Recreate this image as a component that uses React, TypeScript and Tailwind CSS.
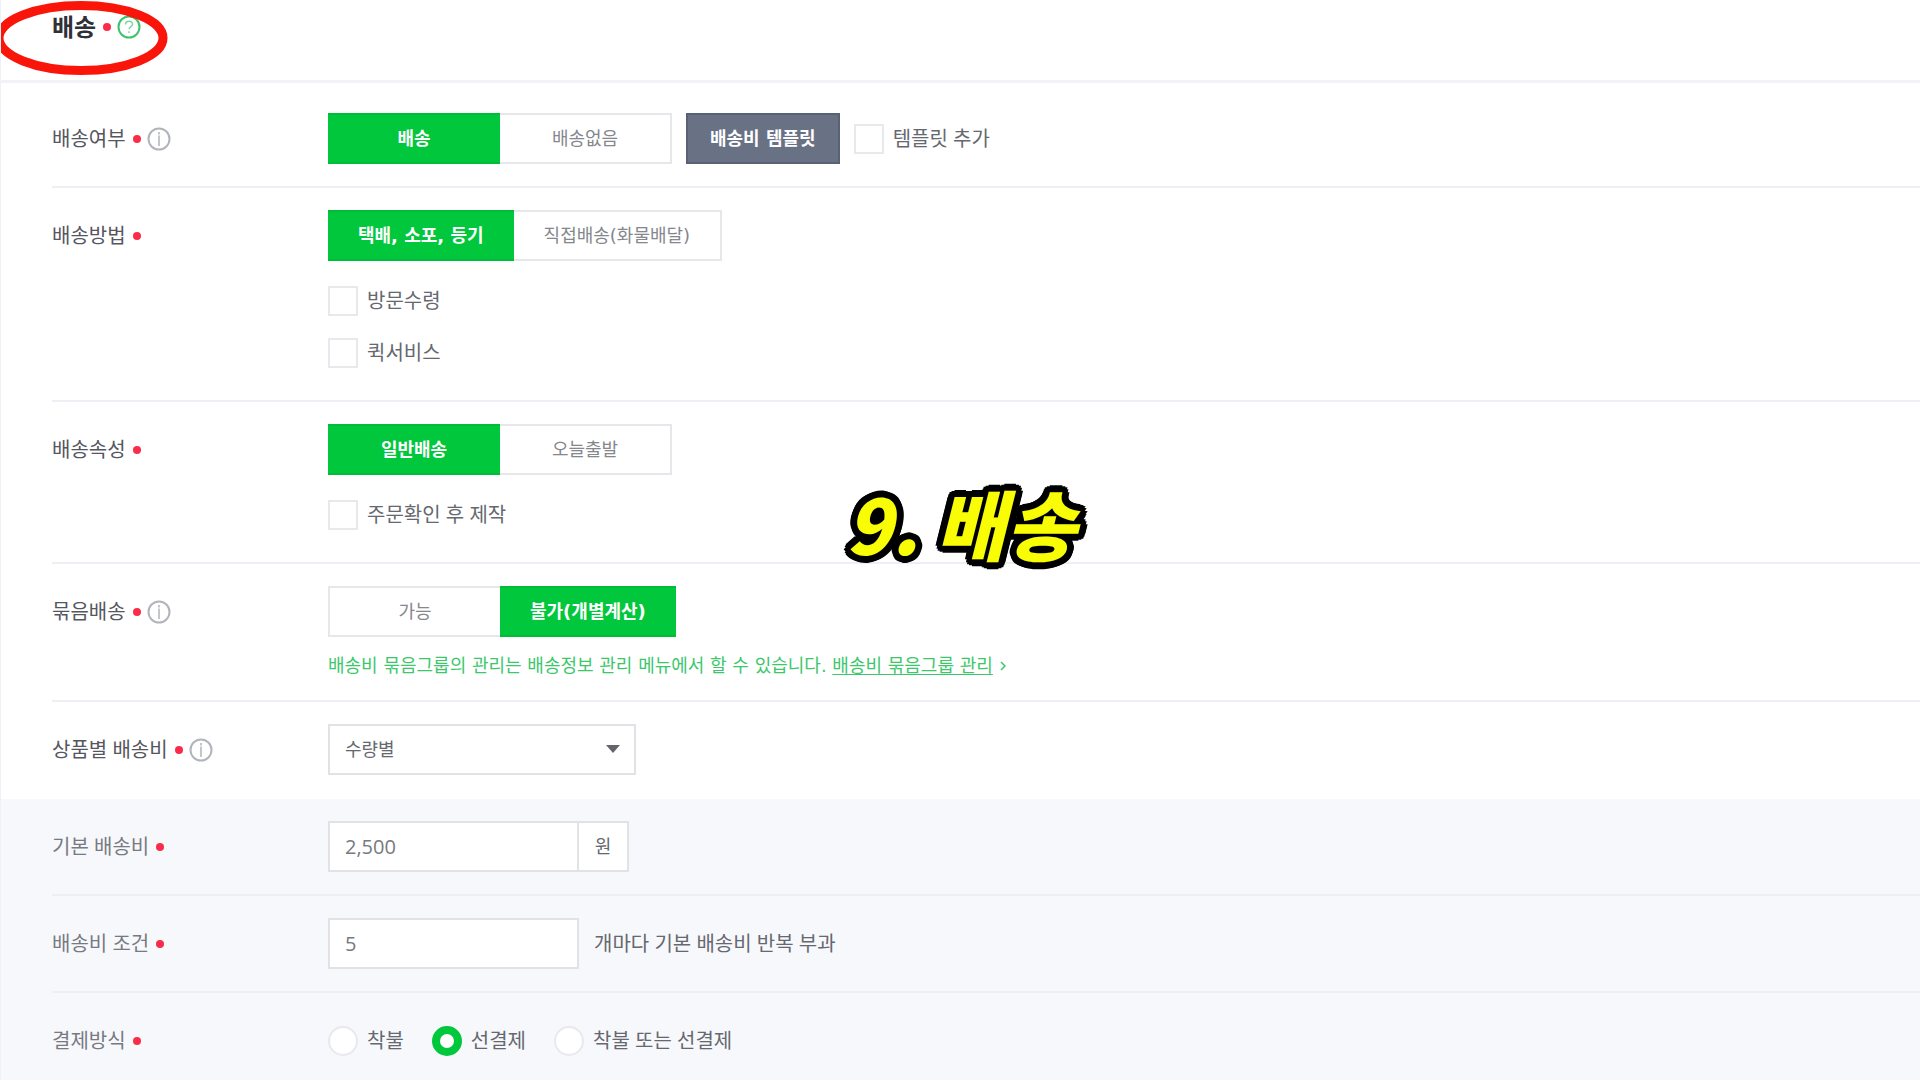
import React, { useState } from 'react';
import { clsx } from 'clsx';

const BUTTON_FONT = "font-['DejaVu_Sans','Noto_Sans_CJK_KR',sans-serif]";

function HelpIcon() {
    return (
        <svg width="24" height="24" viewBox="0 0 24 24" fill="none" stroke="#3cc36b" strokeWidth="2">
            <circle cx="12" cy="12" r="10.5" />
            <path d="M8.5 9.5c0-2 1.500-3.300 3.500-3.300s3.500 1.200 3.500 3c0 2.300-3.400 2.500-3.400 5" strokeWidth="1.500" stroke="#7fd6a0" />
            <path d="M12 16.300v1.700" strokeWidth="1.500" stroke="#7fd6a0" />
        </svg>
    );
}

function InfoIcon() {
    return (
        <svg width="24" height="24" viewBox="0 0 24 24" fill="none" stroke="#b2b4bc">
            <circle cx="12" cy="12" r="10.5" strokeWidth="2" />
            <path d="M12 5v2.500M12 8.500v10.500" strokeWidth="1.500" />
        </svg>
    );
}

function Dot() {
    return <span className="ml-[7px] h-2 w-2 shrink-0 rounded-full bg-[#fb2c4a]" />;
}

function Row({ label, info, muted, className, children }: {
    label: string,
    info?: boolean,
    muted?: boolean,
    className?: string,
    children: React.ReactNode
}) {
    return (
        <div role="group" aria-label={label} className={clsx('ml-[51px] flex border-[#eeeff4]', className)}>
            <div className={clsx('flex h-[51px] w-[276px] shrink-0 items-center text-[20px] leading-[25px]', muted ? 'text-[#777a82]' : 'text-[#55565e]')}>
                <span>{label}</span>
                <Dot />
                {info && <span className="ml-[6px]"><InfoIcon /></span>}
            </div>
            <div className="min-w-0 flex-1">{children}</div>
        </div>
    );
}

function Toggle({ options, initial }: { options: string[], initial: number }) {
    const [active, setActive] = useState(initial);

    return (
        <div className="flex">
            {options.map((option, i) => (
                <button
                    key={option}
                    type="button"
                    aria-pressed={active === i}
                    onClick={() => setActive(i)}
                    className={clsx(
                        'h-[51px] min-w-[172px] border-y-2 px-[30px] text-[18px] leading-[25px] whitespace-nowrap',
                        BUTTON_FONT,
                        active === i
                            ? 'border-[#00bd39] bg-[#00c73c] font-bold text-white'
                            : 'border-[#e6e7ea] bg-white text-[#85878d]',
                        active !== i && i === 0 && 'border-l-2',
                        active !== i && i === options.length - 1 && 'border-r-2'
                    )}
                >
                    {option}
                </button>
            ))}
        </div>
    );
}

function Checkbox({ label }: { label: string }) {
    return (
        <label className="flex w-fit items-center gap-[9px] text-[20px] leading-[30px] text-[#66686f]">
            <input type="checkbox" className="h-[30px] w-[30px] appearance-none border-2 border-[#e8e9ec] bg-white checked:bg-[#00c73c]" />
            {label}
        </label>
    );
}

const PAYMENTS = ['착불', '선결제', '착불 또는 선결제'];

export default function App() {
    const [payment, setPayment] = useState('선결제');

    return (
        <div className="relative flex min-h-screen flex-col overflow-hidden border-l border-[#eef1f8] bg-white font-['Open_Sans','Noto_Sans_CJK_KR',sans-serif]">
            <header className="flex items-center border-b-3 border-[#f2f3f6] pt-[13px] pb-[39px] pl-[51px]">
                <h1 className="text-[24px] leading-7 font-bold text-[#303038]">배송</h1>
                <Dot />
                <span className="ml-[6px]"><HelpIcon /></span>
            </header>

            <Row label="배송여부" info className="border-b-2 pt-[30px] pb-[22px]">
                <div className="flex items-center gap-[14px]">
                    <Toggle options={['배송', '배송없음']} initial={0} />
                    <button type="button" className={clsx('h-[51px] border-2 border-[#596175] bg-[#697185] px-[22px] text-[18px] leading-[25px] font-bold text-white', BUTTON_FONT)}>
                        배송비 템플릿
                    </button>
                    <Checkbox label="템플릿 추가" />
                </div>
            </Row>

            <Row label="배송방법" className="border-b-2 pt-[22px] pb-8">
                <Toggle options={['택배, 소포, 등기', '직접배송(화물배달)']} initial={0} />
                <div className="mt-[25px] flex flex-col gap-[22px]">
                    <Checkbox label="방문수령" />
                    <Checkbox label="퀵서비스" />
                </div>
            </Row>

            <Row label="배송속성" className="border-b-2 pt-[22px] pb-8">
                <Toggle options={['일반배송', '오늘출발']} initial={0} />
                <div className="mt-[25px]">
                    <Checkbox label="주문확인 후 제작" />
                </div>
            </Row>

            <Row label="묶음배송" info className="border-b-2 pt-[22px] pb-[22px]">
                <Toggle options={['가능', '불가(개별계산)']} initial={1} />
                <p className={clsx('mt-[17px] flex items-center text-[18px] leading-6 text-[#3cc76b]', BUTTON_FONT)}>
                    <span className="whitespace-pre">배송비 묶음그룹의 관리는 배송정보 관리 메뉴에서 할 수 있습니다. </span>
                    <a href="#group" className="underline underline-offset-2">배송비 묶음그룹 관리</a>
                    <svg className="ml-[7px]" width="6" height="10" viewBox="0 0 6 10" fill="none" stroke="#3cc76b" strokeWidth="1.500">
                        <path d="M1 1l4 4-4 4" />
                    </svg>
                </p>
            </Row>

            <Row label="상품별 배송비" info className="pt-[22px] pb-6">
                <div className="relative w-[308px]">
                    <select aria-label="상품별 배송비" className={clsx('h-[51px] w-full appearance-none border-2 border-[#e1e2e6] bg-white px-[15px] text-[18px] text-[#66686f]', BUTTON_FONT)}>
                        <option>수량별</option>
                    </select>
                    <svg className="pointer-events-none absolute top-[21px] right-4" width="14" height="8" viewBox="0 0 14 8" fill="#63656b">
                        <path d="M0 0h14L7 8z" />
                    </svg>
                </div>
            </Row>

            <section className="flex-1 bg-[#f7f8fc]">
                <Row label="기본 배송비" muted className="border-b-2 pt-[22px] pb-[22px]">
                    <div className="flex">
                        <input aria-label="기본 배송비" defaultValue="2,500" className="h-[51px] w-[251px] border-2 border-[#e1e2e6] bg-white px-[15px] text-[20px] text-[#777a80]" />
                        <span className="flex h-[51px] w-[50px] items-center justify-center border-2 border-l-0 border-[#e1e2e6] bg-white text-[18px] text-[#66686f]">원</span>
                    </div>
                </Row>

                <Row label="배송비 조건" muted className="border-b-2 pt-[22px] pb-[22px]">
                    <label className="flex items-center gap-[15px] text-[20px] text-[#66686f]">
                        <input defaultValue="5" className="h-[51px] w-[251px] border-2 border-[#e1e2e6] bg-white px-[15px] text-[20px] text-[#777a80]" />
                        개마다 기본 배송비 반복 부과
                    </label>
                </Row>

                <Row label="결제방식" muted className="pt-[22px] pb-[14px]">
                    <div className="flex h-[51px] items-center gap-7">
                        {PAYMENTS.map((name) => (
                            <label key={name} className="flex items-center gap-[9px] text-[20px] leading-[30px] text-[#66686f]">
                                <input
                                    type="radio"
                                    name="payment"
                                    checked={payment === name}
                                    onChange={() => setPayment(name)}
                                    className="h-[30px] w-[30px] appearance-none rounded-full border-2 border-[#e8e9ed] bg-white checked:border-8 checked:border-[#00c73c]"
                                />
                                {name}
                            </label>
                        ))}
                    </div>
                </Row>
            </section>

            {/* marker around the section title */}
            <svg className="pointer-events-none absolute top-0 -left-2" width="180" height="80" viewBox="-7 0 180 80" fill="none">
                <ellipse cx="81" cy="38" rx="82" ry="32.500" stroke="#fa150a" strokeWidth="9" />
            </svg>

            <div className="pointer-events-none absolute inset-x-0 top-[480px] flex justify-center">
                <strong className="font-['Noto_Sans_CJK_KR',sans-serif] text-[76px] leading-[84px] font-black whitespace-nowrap text-[#f8fc05] italic [-webkit-text-stroke:6px_#f8fc05] [paint-order:stroke] [stroke-linejoin:round] [text-shadow:7px_0_#000,-7px_0_#000,0_7px_#000,0_-7px_#000,5px_5px_#000,-5px_5px_#000,5px_-5px_#000,-5px_-5px_#000,6px_3px_#000,-6px_3px_#000,6px_-3px_#000,-6px_-3px_#000,3px_6px_#000,-3px_6px_#000,3px_-6px_#000,-3px_-6px_#000]">
                    9. 배송
                </strong>
            </div>
        </div>
    );
}
